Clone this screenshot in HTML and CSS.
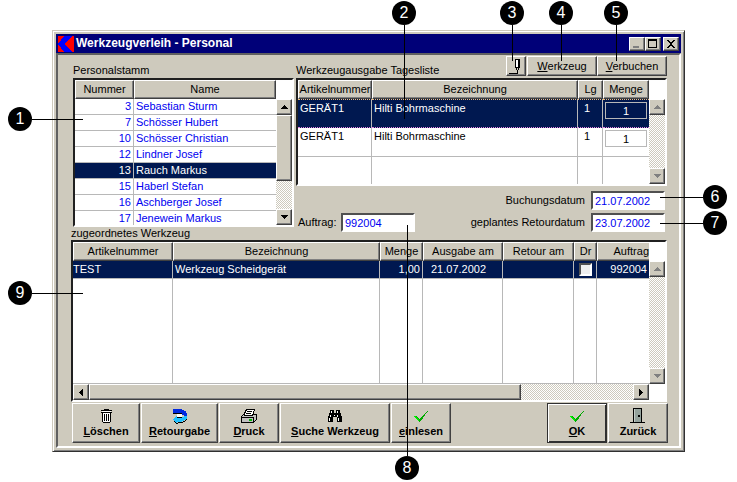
FILE: index.html
```
<!DOCTYPE html>
<html lang="de">
<head>
    <meta charset="UTF-8">
    <title>Werkzeugverleih - Personal</title>
    <link rel="stylesheet" href="styles.css">
</head>
<body>
    <main class="window">
        <header class="titlebar">
            <svg class="logo" viewBox="0 0 16 16"><path fill="#f00" d="M0 0h16v16H0z"/><path fill="#00f" d="M6 0h8L7 8l7 8H6L0 8z"/></svg>
            <h1>Werkzeugverleih - Personal</h1>
            <button class="winbtn" aria-label="Minimieren"><svg viewBox="0 0 10 10"><path fill="#808080" d="M1 7h6v2H1z"/></svg></button>
            <button class="winbtn" aria-label="Maximieren"><svg viewBox="0 0 10 10"><path d="M0 0h9v9H0zM1 2v6h7V2z" fill-rule="evenodd"/></svg></button>
            <button class="winbtn close" aria-label="Schließen"><svg viewBox="0 0 10 10"><path d="M1 1h2v1h1v1h2V2h1V1h2v1H8v1H7v1H6v2h1v1h1v1h1v1H7V8H6V7H4v1H3v1H1V8h1V7h1V6h1V4H3V3H2V2H1z"/></svg></button>
        </header>

        <div class="client">
            <div class="top">
                <section class="staff">
                    <div class="caption-row"><h2>Personalstamm</h2></div>
                    <div class="list">
                        <table>
                            <colgroup><col class="w-number"><col></colgroup>
                            <thead><tr><th>Nummer</th><th>Name</th></tr></thead>
                            <tbody>
                                <tr><td>3</td><td>Sebastian Sturm</td></tr>
                                <tr><td>7</td><td>Schösser Hubert</td></tr>
                                <tr><td>10</td><td>Schösser Christian</td></tr>
                                <tr><td>12</td><td>Lindner Josef</td></tr>
                                <tr class="selected"><td>13</td><td>Rauch Markus</td></tr>
                                <tr><td>15</td><td>Haberl Stefan</td></tr>
                                <tr><td>16</td><td>Aschberger Josef</td></tr>
                                <tr><td>17</td><td>Jenewein Markus</td></tr>
                            </tbody>
                        </table>
                        <div class="vscroll">
                            <button aria-label="Nach oben"><svg viewBox="0 0 7 4"><path d="M3 0h1v1h1v1h1v1h1v1H0V3h1V2h1V1h1z"/></svg></button>
                            <div class="thumb"></div>
                            <button class="end" aria-label="Nach unten"><svg viewBox="0 0 7 4"><path d="M0 0h7v1H6v1H5v1H4v1H3V3H2V2H1V1H0z"/></svg></button>
                        </div>
                    </div>
                </section>

                <section class="daily">
                    <div class="caption-row">
                        <h2>Werkzeugausgabe Tagesliste</h2>
                        <button class="btn pen" aria-label="Bearbeiten"><svg viewBox="0 0 12 15"><path fill="#fff" d="M7 1h3v7H7z"/><path d="M6 0h5v1H6zM6 1h1v7H6zM9 1h2v7H9zM6 8h5v1H6zM7 9h1v2H7zM9 9h1v2H9zM8 11h1v3H8zM0 14h9v1H0z"/></svg></button>
                        <button class="btn"><u>W</u>erkzeug</button>
                        <button class="btn"><u>V</u>erbuchen</button>
                    </div>
                    <div class="list">
                        <table>
                            <colgroup><col class="w-article"><col><col class="w-lg"><col class="w-amount"></colgroup>
                            <thead><tr><th>Artikelnummer</th><th>Bezeichnung</th><th>Lg</th><th>Menge</th></tr></thead>
                            <tbody>
                                <tr class="selected"><td>GERÄT1</td><td>Hilti Bohrmaschine</td><td>1</td><td><input type="text" value="1" aria-label="Menge"></td></tr>
                                <tr><td>GERÄT1</td><td>Hilti Bohrmaschine</td><td>1</td><td><input type="text" value="1" aria-label="Menge"></td></tr>
                                <tr><td></td><td></td><td></td><td></td></tr>
                            </tbody>
                        </table>
                        <div class="vscroll">
                            <button disabled aria-label="Nach oben"><svg viewBox="0 0 7 4"><path d="M3 0h1v1h1v1h1v1h1v1H0V3h1V2h1V1h1z"/></svg></button>
                            <button disabled class="end" aria-label="Nach unten"><svg viewBox="0 0 7 4"><path d="M0 0h7v1H6v1H5v1H4v1H3V3H2V2H1V1H0z"/></svg></button>
                        </div>
                    </div>
                    <form class="fields">
                        <label class="wide" for="booking">Buchungsdatum</label>
                        <input id="booking" type="text" value="21.07.2002">
                        <label class="order" for="order">Auftrag:</label>
                        <input id="order" type="text" value="992004">
                        <label for="return">geplantes Retourdatum</label>
                        <input id="return" type="text" value="23.07.2002">
                    </form>
                </section>
            </div>

            <section class="assigned">
                <h2>zugeordnetes Werkzeug</h2>
                <div class="list">
                    <table>
                        <colgroup><col class="w-tool"><col><col class="w-qty"><col class="w-issued"><col class="w-returned"><col class="w-dr"><col class="w-order"></colgroup>
                        <thead><tr><th>Artikelnummer</th><th>Bezeichnung</th><th>Menge</th><th>Ausgabe am</th><th>Retour am</th><th>Dr</th><th>Auftrag</th></tr></thead>
                        <tbody>
                            <tr class="selected"><td>TEST</td><td>Werkzeug Scheidgerät</td><td>1,00</td><td>21.07.2002</td><td></td><td><input type="checkbox" aria-label="Dr"></td><td>992004</td></tr>
                            <tr class="rest"><td></td><td></td><td></td><td></td><td></td><td></td><td></td></tr>
                        </tbody>
                    </table>
                    <div class="vscroll">
                        <button disabled aria-label="Nach oben"><svg viewBox="0 0 7 4"><path d="M3 0h1v1h1v1h1v1h1v1H0V3h1V2h1V1h1z"/></svg></button>
                        <button disabled class="end" aria-label="Nach unten"><svg viewBox="0 0 7 4"><path d="M0 0h7v1H6v1H5v1H4v1H3V3H2V2H1V1H0z"/></svg></button>
                    </div>
                    <div class="hscroll">
                        <button aria-label="Nach links"><svg viewBox="0 0 4 7"><path d="M4 0v7H3V6H2V5H1V4H0V3h1V2h1V1h1V0z"/></svg></button>
                        <div class="thumb"></div>
                        <button class="end" aria-label="Nach rechts"><svg viewBox="0 0 4 7"><path d="M0 0v7h1V6h1V5h1V4h1V3H3V2H2V1H1V0z"/></svg></button>
                    </div>
                </div>
            </section>

            <footer class="toolbar">
                <button class="btn tool-delete">
                    <svg viewBox="0 0 16 16"><path fill="#fff" d="M4 2h9v12H4z"/><path d="M6 1h5v1H6zM3 2h11v1H3zM3 4h11v1H3zM4 5h1v9H4zM12 5h1v9h-1zM5 14h7v1H5zM6 6h1v7H6zM8 6h1v7H8zM10 6h1v7h-1z"/></svg>
                    <span><u>L</u>öschen</span>
                </button>
                <button class="btn tool-return">
                    <svg viewBox="0 0 16 16"><path fill="#0028e0" d="M1 1h9v1h2v1h2v2h1v5h-3V7h-2V5H1z"/><path fill="#fff" d="M5 6h5v3H5z"/><path fill="#20c0ff" d="M5 8v2h5V9h2V8h3v3h-1v1h-2v1h-2v1H5v1H4v-1H3v-1H2v-1H1v-1h1v-1h1V9h1V8z"/><path d="M1 5h9v1H1zM5 9h5v1H5zM2 13h1v1H2zM3 14h1v1H3zM4 15h2v1H4zM6 14h5v1H6zM11 13h2v1h-2zM13 12h1v1h-1zM14 11h1v1h-1z"/></svg>
                    <span><u>R</u>etourgabe</span>
                </button>
                <button class="btn tool-print">
                    <svg viewBox="0 0 16 16"><path fill="#fff" stroke="#000" d="M5.500 1.500h8l-2 6h-9z"/><path stroke="#000" d="M6 3.500h5M5 5.500h5"/><path fill="#c0c0c0" stroke="#000" d="M.5 8.500l2-2h1v1h8v-1h4v5l-3 3H.5z"/><path stroke="#000" d="M1 9.500h12M12.500 10v4"/><path fill="#0b0" d="M8 11h3v2H8z"/></svg>
                    <span><u>D</u>ruck</span>
                </button>
                <button class="btn tool-search">
                    <svg viewBox="0 0 16 16"><path d="M3 2h4v3h2V2h4v3h1v3h1v6h-5V9H6v5H1V8h1V5h1z"/><path fill="#fff" d="M4 3h1v2H4zM10 3h1v2h-1zM3 7h1v2H3zM2 10h1v3H2zM10 7h1v2h-1zM11 10h1v3h-1zM7 7h1v1H7z"/></svg>
                    <span><u>S</u>uche Werkzeug</span>
                </button>
                <button class="btn tool-read">
                    <svg viewBox="0 0 16 16"><path fill="#0a0" d="M1 8h3l2 3 9-9v1l-8 11H6z"/><path fill="#0e0" d="M1 8h2l3 4v2z"/></svg>
                    <span><u>e</u>inlesen</span>
                </button>
                <button class="btn tool-ok">
                    <svg viewBox="0 0 16 16"><path fill="#0a0" d="M1 8h3l2 3 9-9v1l-8 11H6z"/><path fill="#0e0" d="M1 8h2l3 4v2z"/></svg>
                    <span><u>O</u>K</span>
                </button>
                <button class="btn tool-back">
                    <svg viewBox="0 0 16 16"><path d="M0 14h15v1H0zM3 0h9v14H3z"/><path fill="#94a29c" d="M4 1h7v13H4z"/><path fill="#c4ccc8" d="M4 1h1v13H4z"/><path d="M8 7h2v2H8z"/></svg>
                    <span>Zurück</span>
                </button>
            </footer>
        </div>
    </main>

    <!-- numbered callouts over the window -->
    <div class="callout right n1">1</div>
    <div class="callout down n2">2</div>
    <div class="callout down n3">3</div>
    <div class="callout down n4">4</div>
    <div class="callout down n5">5</div>
    <div class="callout left n6">6</div>
    <div class="callout left n7">7</div>
    <div class="callout up n8">8</div>
    <div class="callout right n9">9</div>
</body>
</html>
```
FILE: styles.css
```
* {
    box-sizing: border-box;
}
body {
    position: relative;
    margin: 0;
    padding: 30px 52px;
    background: #fff;
    color: #000;
    font-family: "Liberation Sans", Arial, sans-serif;
    font-size: 11px;
    line-height: 13px;
}
h1, h2 {
    margin: 0;
    font-size: 11px;
    font-weight: normal;
}
svg {
    display: block;
    shape-rendering: crispEdges;
}
button, input {
    font: inherit;
    color: inherit;
}
button {
    padding: 0;
    background: #cecabd;
    border: 1px solid;
    border-color: #fff #404040 #404040 #fff;
    box-shadow: inset -1px -1px #808080;
}

/* window frame */
.window {
    padding: 2px;
    background: #cecabd;
    border: 1px solid;
    border-color: #cecabd #303030 #303030 #cecabd;
    box-shadow: inset 1px 1px #fff, inset -1px -1px #808080;
}
.titlebar {
    display: flex;
    align-items: center;
    height: 19px;
    margin: 1px 1px 0;
    padding: 0 2px;
    background: #000078;
    color: #fff;
}
.titlebar h1 {
    flex: 1;
    margin-left: 2px;
    font-size: 12px;
    font-weight: bold;
}
.logo {
    width: 16px;
    height: 16px;
}
.winbtn {
    display: flex;
    align-items: center;
    justify-content: center;
    width: 16px;
    height: 14px;
}
.winbtn svg {
    width: 10px;
    height: 10px;
}
.close {
    margin-left: 2px;
}
.client {
    margin: 0 1px 1px;
    padding: 1px 11px 3px 13px;
    border: 2px solid;
    border-color: #606060 #fff #fff #606060;
}

/* lists */
.top {
    display: grid;
    grid-template-columns: 221px 1fr;
    gap: 2px;
    margin: 0 1px 0 2px;
}
.caption-row {
    display: flex;
    height: 22px;
}
.caption-row h2 {
    flex: 1;
    align-self: flex-end;
    padding-bottom: 1px;
}
.list {
    display: grid;
    grid-template-columns: 1fr 16px;
    background: #fff;
    border: 2px solid;
    border-color: #202020 #fff #fff #202020;
    overflow: hidden;
}
table {
    width: 100%;
    table-layout: fixed;
    border-collapse: separate;
    border-spacing: 0;
}
th {
    height: 19px;
    padding: 0;
    background: #cecabd;
    border: 1px solid;
    border-color: #fff #404040 #404040 #fff;
    box-shadow: inset -1px -1px #808080;
    font-weight: normal;
    white-space: nowrap;
}
td {
    padding: 0 2px;
    border: solid #b8b8b8;
    border-width: 0 1px 1px 0;
    white-space: nowrap;
}
td:last-child {
    border-right: 0;
}
.selected td {
    background: #001850;
    color: #fff;
}
.staff .list {
    height: 149px;
    grid-template-rows: 100%;
}
.staff td {
    height: 16px;
    color: #0000f0;
}
.staff td:first-child {
    text-align: right;
}
.staff .selected td {
    color: #fff;
}
.daily td {
    height: 29px;
    padding-top: 2px;
    vertical-align: top;
}
.daily tbody tr:last-child td {
    height: 27px;
    border-bottom: 0;
}
.daily .selected td {
    border-top: 1px dotted #f0c080;
    border-bottom: 1px dotted #e080e0;
}
.daily td:nth-child(3) {
    padding-left: 6px;
}
.daily td input {
    display: block;
    width: 100%;
    height: 17px;
    padding: 0;
    background: transparent;
    border: 1px solid #b8b8b8;
    text-align: center;
}
.w-number {
    width: 59px;
}
.w-article {
    width: 74px;
}
.w-lg {
    width: 25px;
}
.w-amount {
    width: 46px;
}

/* scrollbars */
.vscroll, .hscroll {
    display: flex;
    background: repeating-conic-gradient(#cecabd 0 25%, #fff 0 50%) 0 0 / 2px 2px;
}
.vscroll {
    flex-direction: column;
    margin-top: 19px;
}
.vscroll button, .hscroll button {
    display: flex;
    align-items: center;
    justify-content: center;
    flex: none;
    width: 16px;
    height: 16px;
}
.vscroll svg {
    width: 7px;
    height: 4px;
}
.hscroll svg {
    width: 4px;
    height: 7px;
}
.vscroll button:disabled {
    fill: #808080;
}
.vscroll .end {
    margin-top: auto;
}
.hscroll .end {
    margin-left: auto;
}
.thumb {
    background: #cecabd;
    border: 1px solid;
    border-color: #fff #404040 #404040 #fff;
    box-shadow: inset -1px -1px #808080;
}
.vscroll .thumb {
    height: 66px;
}
.hscroll .thumb {
    width: 75%;
}

/* order and dates */
.fields {
    display: grid;
    grid-template-columns: 41px 74px 1fr 74px;
    align-items: center;
    gap: 3px 2px;
    margin-top: 5px;
    padding: 0 2px;
}
.fields label {
    padding-right: 4px;
    text-align: right;
}
.fields .wide {
    grid-column: span 3;
}
.fields .order {
    padding: 0;
    text-align: left;
}
.fields input {
    width: 100%;
    height: 19px;
    padding: 0 2px;
    background: #fff;
    border: 2px solid;
    border-color: #505050 #fff #fff #505050;
    color: #0000f0;
}

/* assigned tools, caption tucks in beside the order field */
.assigned {
    margin: -5px 1px 0 0;
}
.assigned .list {
    height: 162px;
    grid-template-rows: 1fr 16px;
}
.assigned table {
    height: 100%;
}
.assigned td {
    height: 18px;
}
.assigned .rest td {
    height: auto;
}
.assigned th:last-child {
    border-right: 0;
    box-shadow: inset 0 -1px #808080;
    text-align: right;
}
.assigned td:nth-child(3), .assigned td:last-child {
    text-align: right;
}
.assigned td:nth-child(4) {
    padding-left: 8px;
}
.assigned td:first-child {
    padding-left: 0;
}
.assigned td input {
    display: block;
    appearance: none;
    width: 13px;
    height: 13px;
    margin: 0 auto;
    background: #eee;
    border: 2px solid;
    border-color: #505050 #fff #fff #505050;
}
.w-tool {
    width: 100px;
}
.w-qty {
    width: 43px;
}
.w-issued {
    width: 80px;
}
.w-returned {
    width: 71px;
}
.w-dr {
    width: 23px;
}
.w-order {
    width: 52px;
}

/* buttons */
.caption-row .btn {
    width: 70px;
    height: 20px;
}
.caption-row .pen {
    width: 20px;
    margin-right: 1px;
    padding-left: 2px;
}
.pen svg {
    width: 12px;
    height: 15px;
}
.toolbar {
    display: flex;
    gap: 1px;
    margin: 1px 0 0 1px;
    font-weight: bold;
}
.toolbar .btn {
    display: flex;
    flex-direction: column;
    align-items: center;
    justify-content: center;
    gap: 1px;
    width: 60px;
    height: 40px;
}
.toolbar svg {
    width: 16px;
    height: 16px;
}
.toolbar .tool-delete {
    width: 68px;
}
.toolbar .tool-return {
    width: 77px;
}
.toolbar .tool-search {
    width: 110px;
}
.toolbar .tool-ok {
    margin-left: auto;
    border-color: #303030;
    box-shadow: inset 1px 1px #fff, inset -1px -1px #303030;
}

/* callouts */
.callout {
    position: absolute;
    width: 24px;
    height: 24px;
    border-radius: 50%;
    background: #000;
    color: #fff;
    font-size: 16px;
    line-height: 24px;
    text-align: center;
}
.callout::after {
    content: "";
    position: absolute;
    background: #000;
}
.down::after {
    top: 24px;
    left: 12px;
    width: 1px;
    height: 36px;
}
.right::after {
    top: 12px;
    left: 24px;
    width: 51px;
    height: 1px;
}
.left::after {
    top: 12px;
    right: 24px;
    width: 43px;
    height: 1px;
}
.up::after {
    bottom: 24px;
    left: 12px;
    width: 1px;
    height: 231px;
}
.n1 {
    top: 107px;
    left: 8px;
}
.n2 {
    top: 1px;
    left: 392px;
}
.n2::after {
    height: 94px;
}
.n3 {
    top: 1px;
    right: 213px;
}
.n4 {
    top: 1px;
    right: 164px;
}
.n5 {
    top: 1px;
    right: 109px;
}
.n6 {
    top: 185px;
    right: 10px;
}
.n7 {
    top: 211px;
    right: 10px;
}
.n8 {
    top: 456px;
    left: 395px;
}
.n9 {
    top: 281px;
    left: 8px;
}
```
